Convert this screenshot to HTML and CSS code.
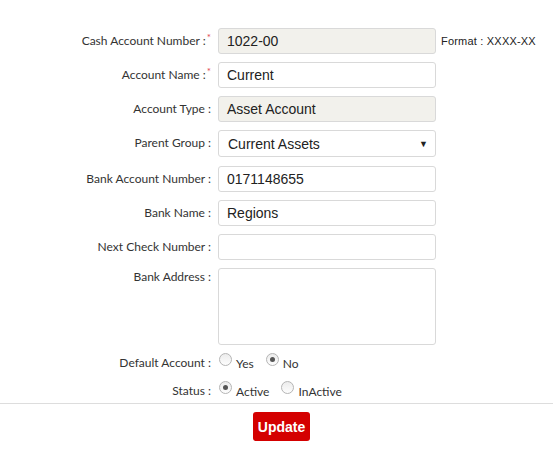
FILE: index.html
```html
<!DOCTYPE html>
<html>
<head>
<meta charset="utf-8">
<link rel="stylesheet" href="styles.css">
</head>
<body>
<div class="form">
  <div class="row">
    <div class="lbl">Cash Account Number :<span class="req">*</span></div>
    <div class="inp ro">1022-00</div>
    <div class="hint">Format : XXXX-XX</div>
  </div>
  <div class="row">
    <div class="lbl">Account Name :<span class="req">*</span></div>
    <div class="inp">Current</div>
  </div>
  <div class="row">
    <div class="lbl">Account Type :</div>
    <div class="inp ro">Asset Account</div>
  </div>
  <div class="row row-sel">
    <div class="lbl">Parent Group :</div>
    <div class="inp sel"><span>Current Assets</span><span class="arrow">▼</span></div>
  </div>
  <div class="row">
    <div class="lbl">Bank Account Number :</div>
    <div class="inp">0171148655</div>
  </div>
  <div class="row">
    <div class="lbl">Bank Name :</div>
    <div class="inp">Regions</div>
  </div>
  <div class="row">
    <div class="lbl">Next Check Number :</div>
    <div class="inp"></div>
  </div>
  <div class="row row-top">
    <div class="lbl lbl-top">Bank Address :</div>
    <div class="inp area"></div>
  </div>
  <div class="row row-radio">
    <div class="lbl lbl-radio">Default Account :</div>
    <div class="radios">
      <span class="opt"><span class="radio"></span><span class="rtext">Yes</span></span>
      <span class="opt"><span class="radio on"></span><span class="rtext">No</span></span>
    </div>
  </div>
  <div class="row row-radio">
    <div class="lbl lbl-radio">Status :</div>
    <div class="radios">
      <span class="opt"><span class="radio on"></span><span class="rtext">Active</span></span>
      <span class="opt"><span class="radio"></span><span class="rtext">InActive</span></span>
    </div>
  </div>
</div>
<div class="footer">
  <button class="btn">Update</button>
</div>
</body>
</html>
```
FILE: styles.css
```css
html, body {
  margin: 0;
  padding: 0;
  background: #fff;
}
body {
  font-family: Lato, "Liberation Sans", sans-serif;
  color: #333;
  width: 553px;
  height: 462px;
  overflow: hidden;
}
.form {
  padding-top: 28px;
}
.row {
  display: flex;
  align-items: center;
  margin-bottom: 8px;
}
.row-sel {
  margin-bottom: 9px;
}
.row-top {
  align-items: flex-start;
  margin-bottom: 0;
}
.row-radio {
  margin-bottom: 2px;
  height: 26px;
}
.lbl {
  width: 212px;
  box-sizing: border-box;
  text-align: right;
  font-size: 12px;
  line-height: 14px;
  color: #333;
  padding-right: 1px;
  padding-bottom: 1px;
  white-space: nowrap;
}
.lbl-top {
  padding-top: 2px;
  padding-bottom: 0;
}
.lbl-radio {
  padding-bottom: 0;
  padding-top: 10px;
}
.req {
  color: #e0464f;
  font-size: 10px;
  position: relative;
  top: -4px;
  margin-left: 1px;
}
.inp {
  margin-left: 6px;
  width: 218px;
  height: 26px;
  box-sizing: border-box;
  border: 1px solid #d9d9d9;
  border-radius: 3px;
  background: #fff;
  font-family: "Liberation Sans", Arial, sans-serif;
  font-size: 14px;
  color: #222;
  padding: 0 8px;
  display: flex;
  align-items: center;
}
.ro {
  background: #f2f1ec;
}
.sel {
  height: 27px;
  justify-content: space-between;
  padding-left: 9px;
  padding-right: 7px;
}
.arrow {
  font-size: 9px;
  color: #222;
}
.area {
  height: 77px;
}
.hint {
  margin-left: 5px;
  font-family: "Liberation Sans", Arial, sans-serif;
  font-size: 11px;
  color: #222;
  letter-spacing: 0.2px;
}
.radios {
  margin-left: 7px;
  margin-top: 6px;
  display: flex;
  align-items: center;
  gap: 12px;
}
.opt {
  display: flex;
  align-items: center;
}
.radio {
  width: 13px;
  height: 13px;
  box-sizing: border-box;
  border-radius: 50%;
  border: 1px solid #b5b5b5;
  background: linear-gradient(#ececec, #fdfdfd);
  position: relative;
  margin-top: -3px;
}
.radio.on::after {
  content: "";
  position: absolute;
  left: 3px;
  top: 3px;
  width: 5px;
  height: 5px;
  border-radius: 50%;
  background: #555;
}
.rtext {
  font-size: 12px;
  color: #333;
  margin-left: 4px;
  margin-top: 5px;
}
.footer {
  border-top: 1px solid #ddd;
  margin-top: 4px;
  display: flex;
  justify-content: center;
  padding-top: 8px;
}
.btn {
  width: 57px;
  height: 29px;
  border: none;
  border-radius: 3px;
  background: #d40000;
  color: #fff;
  font-family: "Liberation Sans", Arial, sans-serif;
  font-weight: bold;
  font-size: 14px;
  padding: 0;
  margin-left: 10px;
}
```
